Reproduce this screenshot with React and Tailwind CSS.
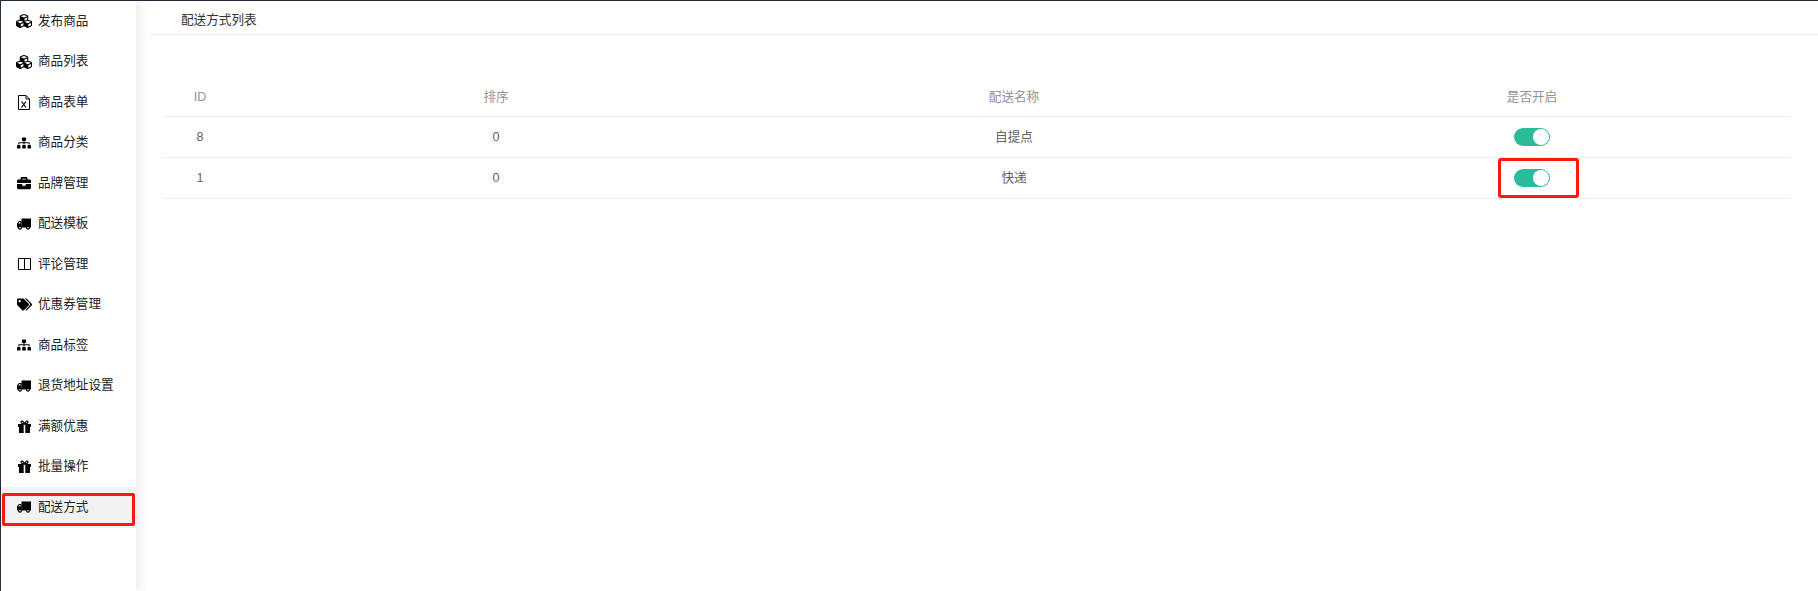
import React from "react";
import { FaCubes, FaSitemap, FaBriefcase, FaTags } from "react-icons/fa";

// these four are drawn by hand, the icon packages only have the newer shapes
const TruckIcon = () => (
  <svg width="14" height="12" viewBox="0 0 14 12" fill="currentColor">
    <path d="M4.500 0.500H14V9.500H4.500Z" />
    <path d="M4.500 3H2L0 5.200V9.500H4.500ZM3.400 3.900V5.500H1.200L2.500 3.900Z" fillRule="evenodd" />
    <circle cx="3" cy="9.700" r="2" />
    <circle cx="11" cy="9.700" r="2" />
    <circle cx="3" cy="9.700" r="0.800" fill="#fff" />
    <circle cx="11" cy="9.700" r="0.800" fill="#fff" />
  </svg>
);

const GiftIcon = () => (
  <svg width="13" height="13" viewBox="0 0 13 13" fill="currentColor">
    <path d="M0 4H13V7H12V13H1V7H0ZM5.700 4V13H7.300V4Z" fillRule="evenodd" />
    <path d="M6.500 4C5 4 3 3.500 3 2C3 0.700 5 0.300 6.500 4C8 0.300 10 0.700 10 2C10 3.500 8 4 6.500 4Z" fill="none" stroke="currentColor" strokeWidth="1.100" />
  </svg>
);

const ColumnsIcon = () => (
  <svg width="13" height="12" viewBox="0 0 13 12" fill="none" stroke="currentColor">
    <path d="M0.500 0.500H12.500V11.500H0.500ZM6.500 0.500V11.500" />
  </svg>
);

const FileIcon = () => (
  <svg width="12" height="15" viewBox="0 0 12 15" fill="none" stroke="currentColor">
    <path d="M0.500 0.500H8L11.500 4V14.500H0.500Z" />
    <path d="M8 0.500V4H11.500" />
    <path d="M3.500 6.500L8 12.500M8 6.500L3.500 12.500" strokeWidth="1.200" />
  </svg>
);

const menu = [
  { name: "发布商品", icon: <FaCubes className="text-[16px]" /> },
  { name: "商品列表", icon: <FaCubes className="text-[16px]" /> },
  { name: "商品表单", icon: <FileIcon /> },
  { name: "商品分类", icon: <FaSitemap className="text-[14px]" /> },
  { name: "品牌管理", icon: <FaBriefcase className="text-[14px]" /> },
  { name: "配送模板", icon: <TruckIcon /> },
  { name: "评论管理", icon: <ColumnsIcon /> },
  { name: "优惠券管理", icon: <FaTags className="text-[15px]" /> },
  { name: "商品标签", icon: <FaSitemap className="text-[14px]" /> },
  { name: "退货地址设置", icon: <TruckIcon /> },
  { name: "满额优惠", icon: <GiftIcon /> },
  { name: "批量操作", icon: <GiftIcon /> },
  { name: "配送方式", icon: <TruckIcon />, active: true },
];

const rows = [
  { id: 8, sort: 0, name: "自提点" },
  { id: 1, sort: 0, name: "快递" },
];

const Switch = () => (
  <div className="mx-auto flex h-[18px] w-[36px] items-center justify-end rounded-full bg-[#2bbb9a] pr-[1px]">
    <div className="h-[16px] w-[16px] rounded-full bg-white" />
  </div>
);

const App = () => {
  return (
    <div
      className="relative flex h-[591px] w-full overflow-hidden border-t-[1px] border-l-[1px] border-[#1f2d3d] bg-white text-[12.6px]"
      style={{ fontFamily: '"Liberation Sans", "Noto Sans CJK SC", sans-serif' }}
    >
      <div className="absolute top-[72px] left-[-1px] h-[46px] w-[1px] bg-[#2bbb9a]" />

      <aside className="w-[135px] shrink-0 shadow-[4px_0_10px_rgba(0,0,0,0.08)]">
        {menu.map((item) => (
          <div
            key={item.name}
            className={
              "flex h-[40.5px] items-center pl-[12px] text-[#222] " +
              (item.active ? "bg-[#f2f2f2]" : "")
            }
          >
            <span className="flex w-[22px] justify-center text-black">{item.icon}</span>
            <span className="ml-[3px]">{item.name}</span>
          </div>
        ))}
      </aside>

      <main className="min-w-0 flex-1">
        <div className="ml-[14px] flex h-[34px] items-center border-b border-[#eeeeee] pt-[5px] pl-[31px] text-[#333]">
          配送方式列表
        </div>
        <div className="mt-[46px] mr-[27px] ml-[27px]">
          <div className="grid h-[36px] grid-cols-[74px_518px_518px_1fr] items-center border-b border-[#ebeef5] pb-[3px] text-center text-[#909399]">
            <div>ID</div>
            <div>排序</div>
            <div>配送名称</div>
            <div>是否开启</div>
          </div>
          {rows.map((row) => (
            <div
              key={row.id}
              className="grid h-[41px] grid-cols-[74px_518px_518px_1fr] items-center border-b border-[#ebeef5] text-center text-[#606266]"
            >
              <div>{row.id}</div>
              <div>{row.sort}</div>
              <div>{row.name}</div>
              <div>
                <Switch />
              </div>
            </div>
          ))}
        </div>
      </main>

      {/* annotation boxes drawn over the screenshot */}
      <div className="absolute top-[492px] left-[1px] h-[33px] w-[133px] rounded-[2px] border-[3px] border-[#fb1a12]" />
      <div className="absolute top-[157px] left-[1497px] h-[40px] w-[81px] rounded-[3px] border-[3px] border-[#fb1a12]" />
    </div>
  );
};

export default App;
